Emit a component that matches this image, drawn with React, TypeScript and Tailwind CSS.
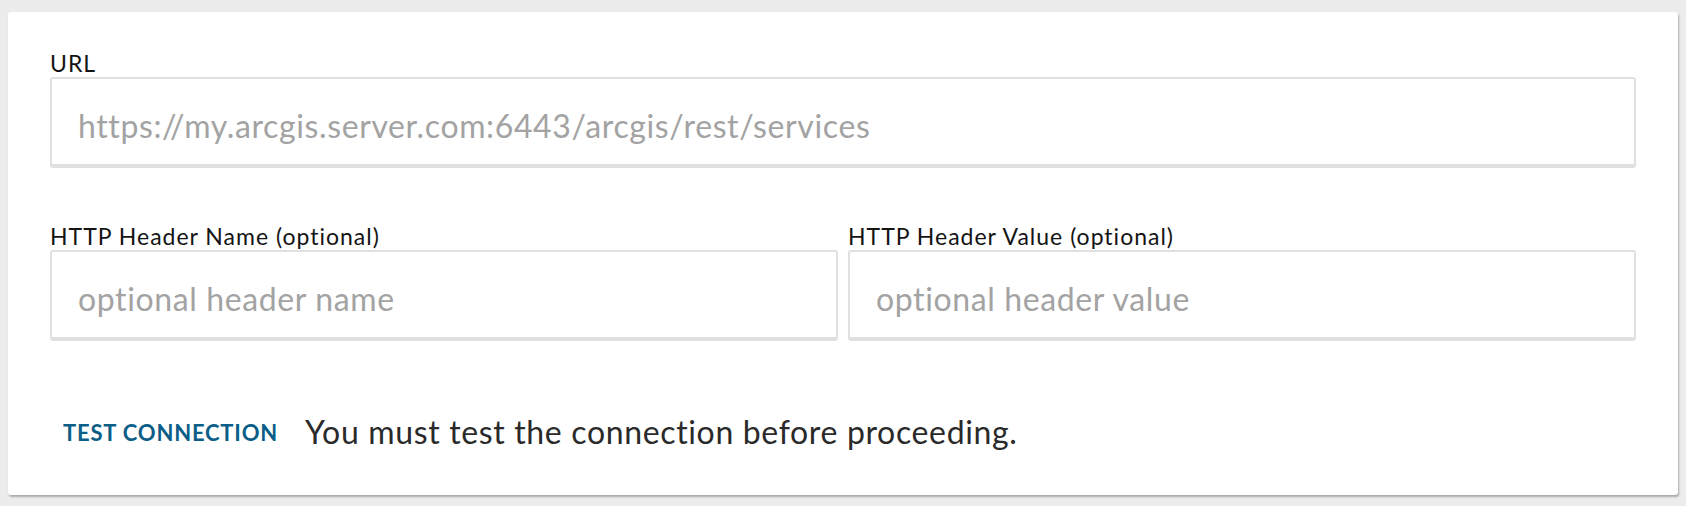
import React from "react";

const font = { fontFamily: '"Lato", "Noto Sans", sans-serif' };

function Field({ label, placeholder }: { label: string; placeholder: string }) {
  return (
    <div className="flex flex-col flex-1 min-w-0">
      <div className="h-[28px] text-[23px] leading-[28px] tracking-[1px] text-[#141414]">{label}</div>
      <input
        readOnly
        placeholder={placeholder}
        className="h-[91px] w-full rounded-[3px] border-2 border-[#e0e0e0] border-b-[4px] bg-white pl-[26px] pt-[7px] text-[32px] tracking-[0.62px] text-[#333] outline-none placeholder:text-[#a3a3a3]"
      />
    </div>
  );
}

export default function App() {
  return (
    <div className="min-h-[506px] w-full bg-[#ececec] px-2 pt-3 pb-[10px]" style={font}>
      <div className="h-[483px] rounded-[3px] bg-white px-[42px] pt-[37px] shadow-[1px_2px_2px_rgba(0,0,0,0.28)]">
        <Field label="URL" placeholder="https://my.arcgis.server.com:6443/arcgis/rest/services" />
        <div className="mt-[54px] flex gap-[10px]">
          <Field label="HTTP Header Name (optional)" placeholder="optional header name" />
          <Field label="HTTP Header Value (optional)" placeholder="optional header value" />
        </div>
        <div className="mt-[66px] flex h-[50px] items-center">
          <button className="ml-[13px] text-[22px] font-bold tracking-[0.8px] text-[#0b5e87]">TEST CONNECTION</button>
          <span className="ml-[27px] text-[32px] tracking-[0.65px] text-[#2a2a2a]">You must test the connection before proceeding.</span>
        </div>
      </div>
    </div>
  );
}
